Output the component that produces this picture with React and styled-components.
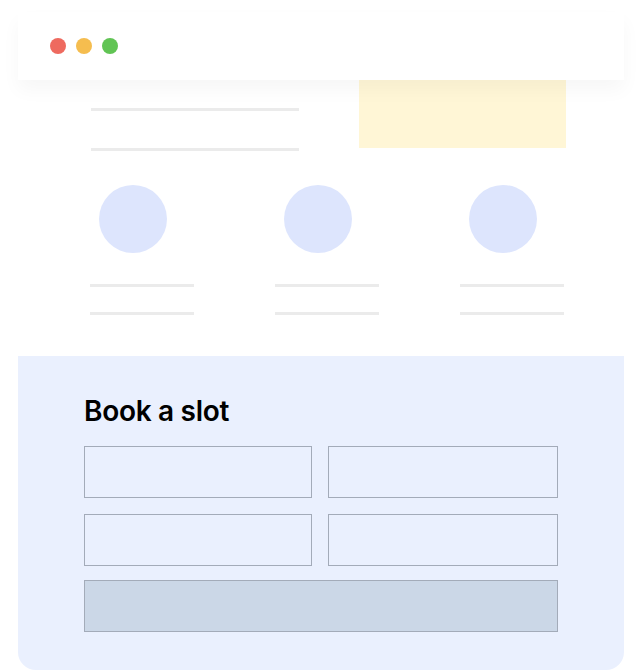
import React from 'react';
import styled, { createGlobalStyle } from 'styled-components';

const Global = createGlobalStyle`
  * { box-sizing: border-box; }
  body {
    margin: 0;
    background: #fff;
    font-family: Inter, Lato, "Noto Sans", sans-serif;
  }
`;

const Page = styled.div`
  padding: 12px 18px 0;
  width: 642px;
`;

const Card = styled.div`
  width: 606px;
`;

const Header = styled.div`
  height: 68px;
  display: flex;
  align-items: center;
  gap: 10px;
  padding-left: 32px;
  background: #fff;
  box-shadow: 0 10px 18px rgba(0, 0, 0, 0.035);
  position: relative;
  z-index: 1;
`;

const Dot = styled.span`
  width: 16px;
  height: 16px;
  border-radius: 50%;
  background: ${(p) => p.color};
`;

const Body = styled.div`
  background: #fff;
`;

const TopRow = styled.div`
  display: flex;
  justify-content: space-between;
  padding: 0 58px 0 73px;
`;

const TextLines = styled.div`
  display: flex;
  flex-direction: column;
  gap: 37px;
  padding-top: 28px;
`;

const Line = styled.div`
  width: ${(p) => p.w}px;
  height: 3px;
  background: #ebebeb;
`;

const Banner = styled.div`
  width: 207px;
  height: 68px;
  background: #fff6d6;
`;

const People = styled.div`
  display: grid;
  grid-template-columns: repeat(3, 104px);
  column-gap: 81px;
  padding: 34px 0 41px 72px;
`;

const Person = styled.div`
  display: flex;
  flex-direction: column;
`;

const Avatar = styled.div`
  width: 68px;
  height: 68px;
  border-radius: 50%;
  background: #dde5fd;
  margin: 0 0 31px 9px;
`;

const PersonLines = styled.div`
  display: flex;
  flex-direction: column;
  gap: 25px;
`;

const Booking = styled.div`
  background: #eaf0fe;
  border-radius: 0 0 18px 18px;
  padding: 37px 66px 38px;
`;

const Title = styled.h2`
  margin: 0 0 17px;
  font-size: 28px;
  line-height: 36px;
  font-weight: 600;
  color: #000;
  letter-spacing: -0.3px;
`;

const Form = styled.div`
  display: grid;
  grid-template-columns: 228px 230px;
  column-gap: 16px;
  row-gap: 16px;
`;

const Field = styled.div`
  height: 52px;
  border: 1px solid #a3abb9;
  background: #eaf0fe;
`;

const Submit = styled.div`
  grid-column: 1 / -1;
  height: 52px;
  margin-top: -2px;
  border: 1px solid #a3abb9;
  background: #cbd7e7;
`;

export default function App() {
  return (
    <>
      <Global />
      <Page>
        <Card>
          <Header>
            <Dot color="#ee6a5f" />
            <Dot color="#f5bd4f" />
            <Dot color="#61c454" />
          </Header>
          <Body>
            <TopRow>
              <TextLines>
                <Line w={208} />
                <Line w={208} />
              </TextLines>
              <Banner />
            </TopRow>
            <People>
              {[0, 1, 2].map((i) => (
                <Person key={i}>
                  <Avatar />
                  <PersonLines>
                    <Line w={104} />
                    <Line w={104} />
                  </PersonLines>
                </Person>
              ))}
            </People>
          </Body>
          <Booking>
            <Title>Book a slot</Title>
            <Form>
              <Field />
              <Field />
              <Field />
              <Field />
              <Submit />
            </Form>
          </Booking>
        </Card>
      </Page>
    </>
  );
}
